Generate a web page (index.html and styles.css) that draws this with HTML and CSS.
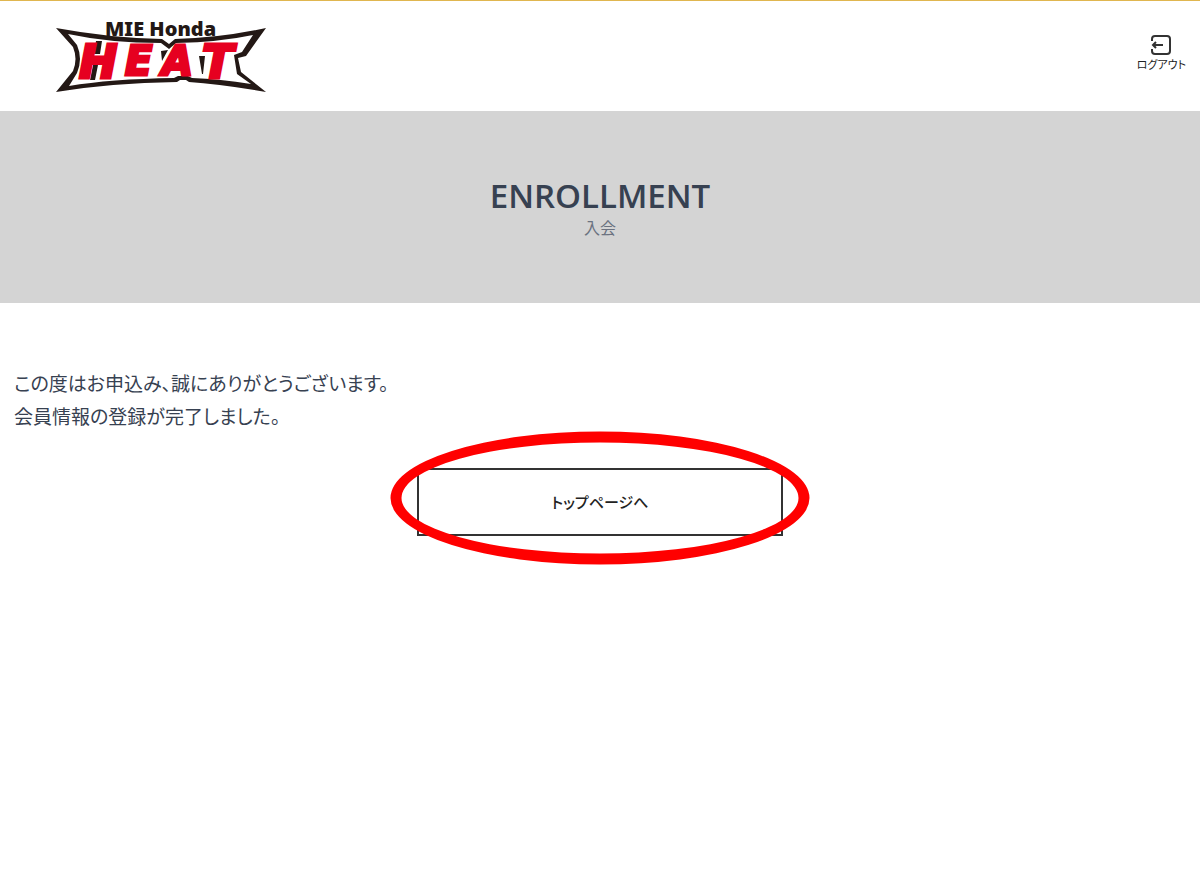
FILE: index.html
```
<!DOCTYPE html>
<html lang="ja">
<head>
  <meta charset="UTF-8" />
  <meta name="viewport" content="width=device-width, initial-scale=1.0" />
  <title>入会 | MIE Honda HEAT</title>
  <link rel="stylesheet" href="styles.css">
</head>
<body>
  <header class="header">
    <a class="logo" href="#" aria-label="MIE Honda HEAT">
      <svg width="212" height="82" viewBox="0 -8 212 82">
        <path fill="#231815" d="M0 9 Q54 19 106 20 L113 25 L119 20 Q164 19 210 9 L190 37 L182 39 L185 53 L210 73 Q164 65 133 63 L130 61 H124 L121 63 Q54 64 0 73 L17 52 Q22 40 17 28 Z" />
        <path fill="#fff" d="M12 15 Q54 24 105 24 L113 30 L120 24 Q164 23 197 16 L186 33 L178 36 L181 55 L195 65 Q164 60 136 59 L132 57 H122 L118 59 Q54 60 13 67 L21 54 Q27 40 21 26 Z" />
        <path fill="#231815" d="M40 22 H46 L44 35 H38 Z M37 46 H42 L39 61 H34 Z M105 32 L112 31 L106 42 Z M143 37 H149 L147 55 H146 Z" />
        <text class="logo-club" x="49" y="17">MIE Honda</text>
        <g class="logo-team">
          <text class="logo-tall" x="23" y="59">H</text>
          <text class="logo-short" x="69" y="56">E</text>
          <text class="logo-short" x="106" y="56">A</text>
          <text class="logo-tall" x="146" y="59">T</text>
        </g>
      </svg>
    </a>
    <a class="logout" href="#">
      <svg width="20" height="20" viewBox="0 0 20 20" fill="none" stroke="#333" stroke-width="2">
        <path d="M1 6V4Q1 1 4 1H16Q19 1 19 4V16Q19 19 16 19H4Q1 19 1 16V14" />
        <path d="M2 10H12M5 7L2 10L5 13" />
      </svg>
      <span>ログアウト</span>
    </a>
  </header>

  <div class="banner">
    <h1>ENROLLMENT</h1>
    <p>入会</p>
  </div>

  <main class="content">
    <p>この度はお申込み、誠にありがとうございます。<br>会員情報の登録が完了しました。</p>
    <div class="action">
      <a class="top-button" href="#">トップページへ</a>
      <span class="marker"></span>
    </div>
  </main>
</body>
</html>
```
FILE: styles.css
```
* {
  box-sizing: border-box;
}

body {
  margin: 0;
  font-family: "Open Sans", "Noto Sans CJK JP", sans-serif;
  font-feature-settings: "palt";
  background: #fff;
  color: #374151;
}

h1,
p {
  margin: 0;
}

a {
  color: #222;
  text-decoration: none;
}

.header {
  display: flex;
  justify-content: space-between;
  align-items: flex-start;
  padding: 10px 14px 18px 56px;
  border-top: 1px solid #e0b64f;
}

.logo svg,
.logout svg {
  display: block;
}

.logo-club {
  font: 900 20px "Noto Sans", sans-serif;
  fill: #231815;
}

.logo-team {
  font-family: "DejaVu Sans", sans-serif;
  font-style: italic;
  font-weight: bold;
  fill: #e60020;
  stroke: #e60020;
  stroke-width: 3px;
}

.logo-tall {
  font-size: 46px;
}

.logo-short {
  font-size: 40px;
}

.logout {
  display: flex;
  flex-direction: column;
  align-items: center;
  padding-top: 24px;
  font-size: 11px;
  line-height: 20px;
}

.banner {
  padding: 64px 16px;
  background: #d4d4d4;
  text-align: center;
}

.banner h1 {
  font-size: 33px;
  font-weight: 600;
  line-height: 42px;
}

.banner p {
  color: #6b7280;
  font-size: 16px;
  line-height: 22px;
}

.content {
  padding: 65px 14px;
  font-size: 19px;
  line-height: 33px;
}

.action {
  display: flex;
  justify-content: center;
  position: relative;
  margin-top: 34px;
}

.top-button {
  width: 366px;
  padding: 16px;
  border: 2px solid #333;
  font-size: 15px;
  font-weight: 500;
  line-height: 32px;
  text-align: center;
}

/* red ring around the button */
.marker {
  position: absolute;
  top: 50%;
  left: 50%;
  width: 419px;
  height: 133px;
  border: 11px solid #f00;
  border-radius: 50%;
  transform: translate(-50%, -53%);
  pointer-events: none;
}
```
